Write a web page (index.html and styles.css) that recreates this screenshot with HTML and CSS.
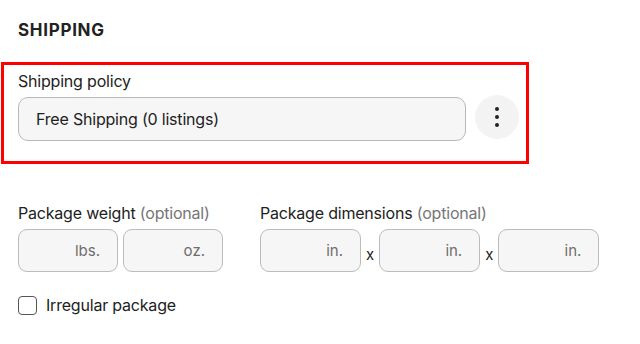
FILE: index.html
```html
<html>
<head>
	<meta charset="UTF-8">
	<link rel="stylesheet" href="styles.css">
</head>
<body>
	<div class="ship">
		<h2 class="ship_title">SHIPPING</h2>

		<div class="ship_policy">
			<div class="ship_label">Shipping policy</div>
			<div class="ship_policy_row">
				<div class="ship_select">Free Shipping (0 listings)</div>
				<div class="ship_more">
					<svg width="6" height="22" viewBox="0 0 6 22">
						<circle cx="3" cy="3" r="2" fill="#222"/>
						<circle cx="3" cy="11" r="2" fill="#222"/>
						<circle cx="3" cy="19" r="2" fill="#222"/>
					</svg>
				</div>
			</div>
		</div>

		<div class="ship_pkg">
			<div class="ship_group">
				<div class="ship_label">Package weight <span class="ship_opt">(optional)</span></div>
				<div class="ship_inputs">
					<div class="ship_input ship_input_w">lbs.</div>
					<div class="ship_input ship_input_w">oz.</div>
				</div>
			</div>
			<div class="ship_group">
				<div class="ship_label">Package dimensions <span class="ship_opt">(optional)</span></div>
				<div class="ship_inputs">
					<div class="ship_input">in.</div>
					<span class="ship_x">x</span>
					<div class="ship_input">in.</div>
					<span class="ship_x">x</span>
					<div class="ship_input">in.</div>
				</div>
			</div>
		</div>

		<label class="ship_check">
			<span class="ship_box"></span>
			Irregular package
		</label>
	</div>
</body>
</html>
```

FILE: styles.css
```css
body
{
	margin: 0;
	background-color: #fff;
	color: #222;
	font-family: Inter, "Noto Sans", sans-serif;
}
.ship
{
	padding-top: 18px;
}
.ship_title
{
	margin: 0 0 20px 18px;
	font-size: 17px;
	line-height: 24px;
	font-weight: 700;
	letter-spacing: 0.7px;
}
.ship_policy
{
	width: 508px;
	margin-left: 1px;
	border: 3px solid #ff0000;
	padding: 6px 0 20px 14px;
}
.ship_label
{
	font-size: 16px;
	line-height: 20px;
	margin-bottom: 6px;
	letter-spacing: -0.2px;
}
.ship_opt
{
	color: #767676;
}
.ship_policy_row
{
	display: flex;
	align-items: center;
	gap: 9px;
}
.ship_select
{
	width: 448px;
	height: 44px;
	box-sizing: border-box;
	border: 1.5px solid #b8b8b8;
	border-radius: 10px;
	background-color: #f6f6f6;
	padding-left: 17px;
	display: flex;
	align-items: center;
	font-size: 16px;
	letter-spacing: -0.2px;
}
.ship_more
{
	width: 44px;
	height: 44px;
	border-radius: 50%;
	background-color: #f3f3f3;
	display: flex;
	align-items: center;
	justify-content: center;
	margin-top: -4px;
}
.ship_pkg
{
	display: flex;
	gap: 37px;
	margin: 39px 0 0 18px;
}
.ship_inputs
{
	display: flex;
	align-items: center;
	gap: 5px;
}
.ship_input
{
	width: 101px;
	height: 43px;
	box-sizing: border-box;
	border: 1.5px solid #bcbcbc;
	border-radius: 9px;
	background-color: #f6f6f6;
	display: flex;
	align-items: center;
	justify-content: flex-end;
	padding-right: 17px;
	font-size: 15px;
	color: #6e6e6e;
}
.ship_input_w
{
	width: 100px;
}
.ship_x
{
	font-size: 15px;
	margin: 8px 0 0;
}
.ship_check
{
	display: flex;
	align-items: center;
	gap: 9px;
	margin: 23px 0 0 18px;
	font-size: 16px;
	letter-spacing: -0.2px;
}
.ship_box
{
	width: 19px;
	height: 19px;
	box-sizing: border-box;
	border: 1.5px solid #555;
	border-radius: 4px;
}
```
